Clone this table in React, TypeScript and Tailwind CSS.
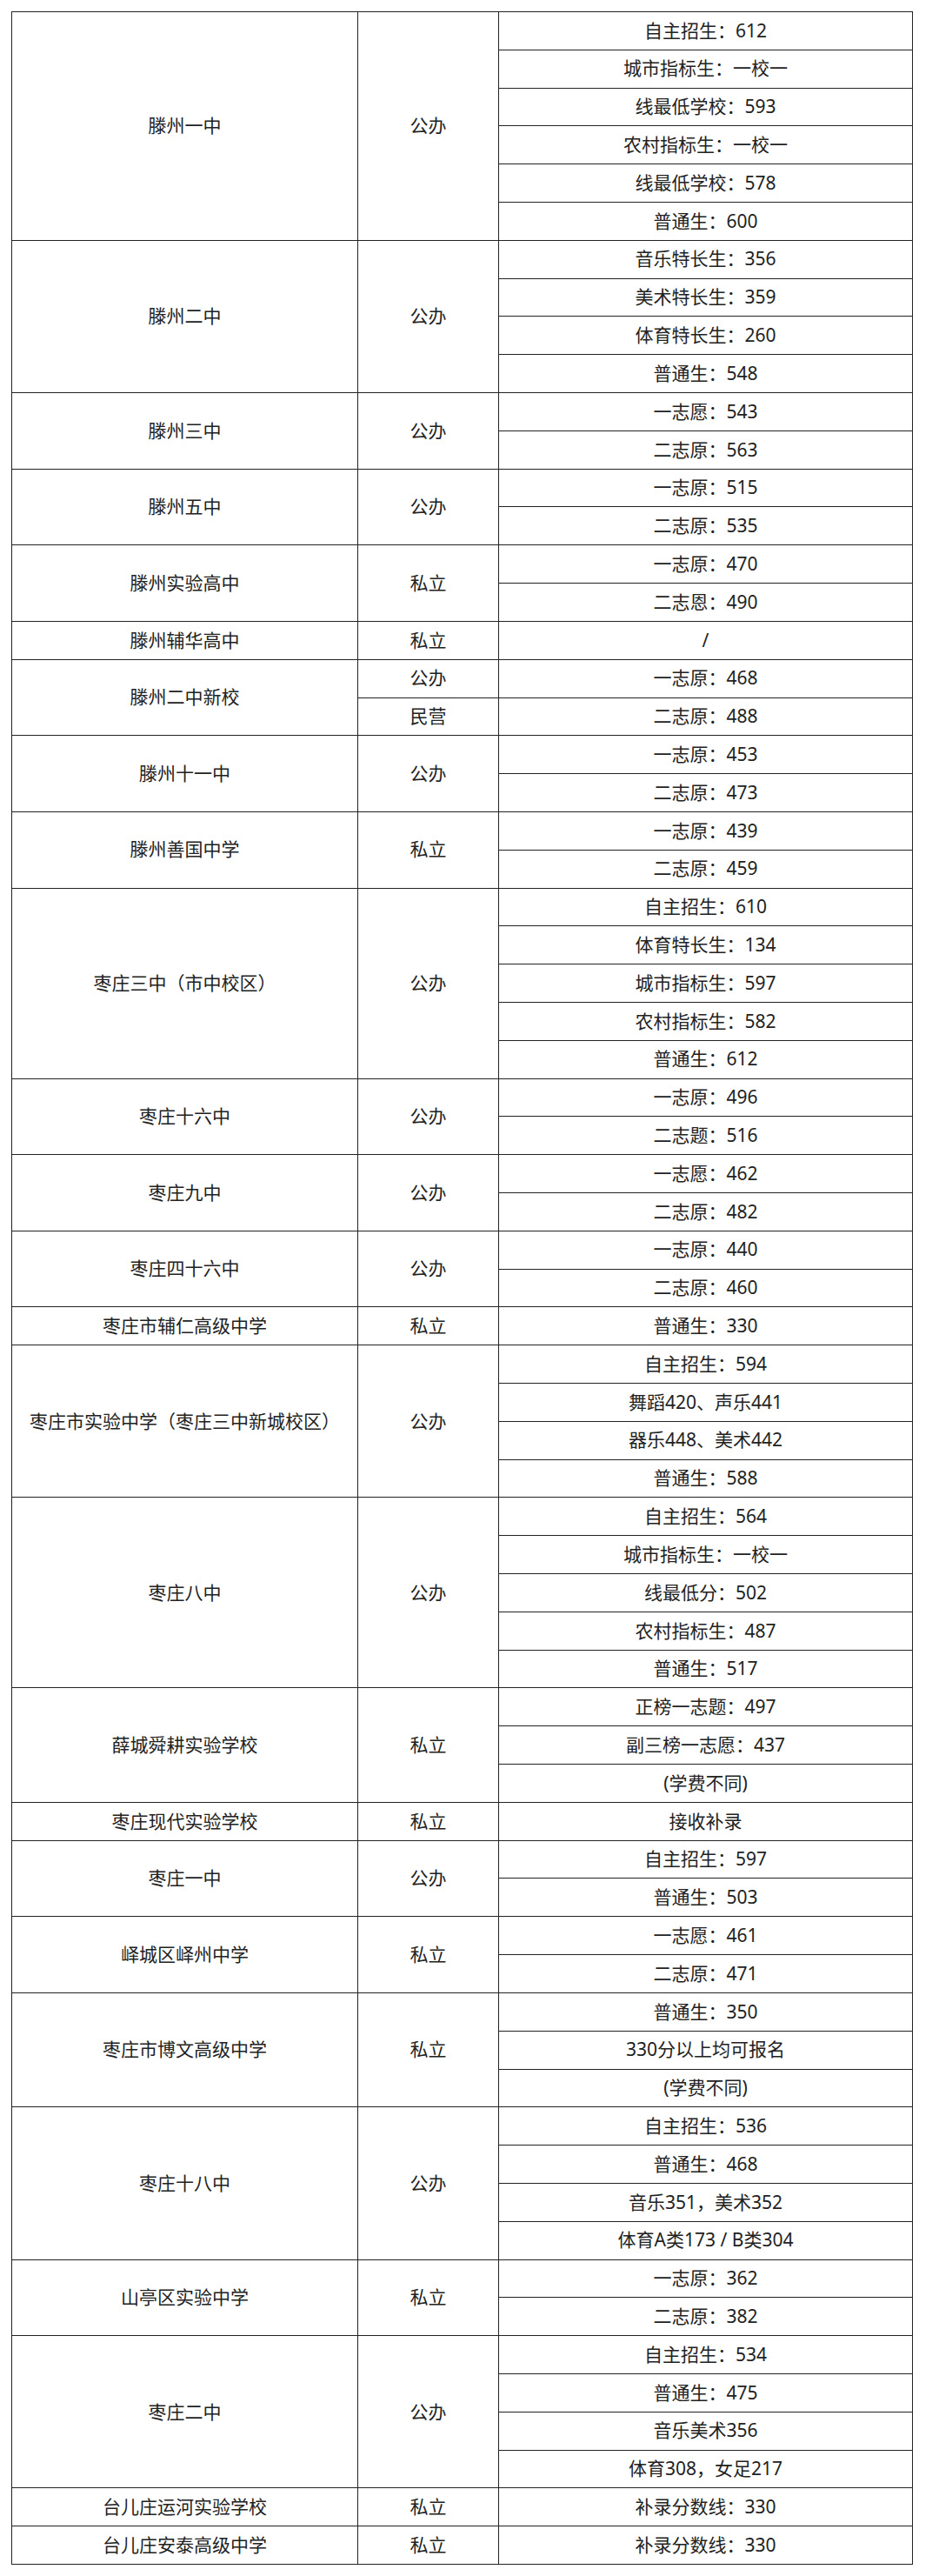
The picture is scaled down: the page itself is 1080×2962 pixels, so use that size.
import React from "react"

type School = {
  name: string
  kind: string | string[]
  lines: string[]
}

const schools: School[] = [
  {
    name: "滕州一中",
    kind: "公办",
    lines: ["自主招生：612", "城市指标生：一校一", "线最低学校：593", "农村指标生：一校一", "线最低学校：578", "普通生：600"],
  },
  { name: "滕州二中", kind: "公办", lines: ["音乐特长生：356", "美术特长生：359", "体育特长生：260", "普通生：548"] },
  { name: "滕州三中", kind: "公办", lines: ["一志愿：543", "二志原：563"] },
  { name: "滕州五中", kind: "公办", lines: ["一志原：515", "二志原：535"] },
  { name: "滕州实验高中", kind: "私立", lines: ["一志原：470", "二志恩：490"] },
  { name: "滕州辅华高中", kind: "私立", lines: ["/"] },
  { name: "滕州二中新校", kind: ["公办", "民营"], lines: ["一志原：468", "二志原：488"] },
  { name: "滕州十一中", kind: "公办", lines: ["一志原：453", "二志原：473"] },
  { name: "滕州善国中学", kind: "私立", lines: ["一志原：439", "二志原：459"] },
  {
    name: "枣庄三中（市中校区）",
    kind: "公办",
    lines: ["自主招生：610", "体育特长生：134", "城市指标生：597", "农村指标生：582", "普通生：612"],
  },
  { name: "枣庄十六中", kind: "公办", lines: ["一志原：496", "二志题：516"] },
  { name: "枣庄九中", kind: "公办", lines: ["一志愿：462", "二志原：482"] },
  { name: "枣庄四十六中", kind: "公办", lines: ["一志原：440", "二志原：460"] },
  { name: "枣庄市辅仁高级中学", kind: "私立", lines: ["普通生：330"] },
  {
    name: "枣庄市实验中学（枣庄三中新城校区）",
    kind: "公办",
    lines: ["自主招生：594", "舞蹈420、声乐441", "器乐448、美术442", "普通生：588"],
  },
  {
    name: "枣庄八中",
    kind: "公办",
    lines: ["自主招生：564", "城市指标生：一校一", "线最低分：502", "农村指标生：487", "普通生：517"],
  },
  { name: "薛城舜耕实验学校", kind: "私立", lines: ["正榜一志题：497", "副三榜一志愿：437", "(学费不同)"] },
  { name: "枣庄现代实验学校", kind: "私立", lines: ["接收补录"] },
  { name: "枣庄一中", kind: "公办", lines: ["自主招生：597", "普通生：503"] },
  { name: "峄城区峄州中学", kind: "私立", lines: ["一志愿：461", "二志原：471"] },
  { name: "枣庄市博文高级中学", kind: "私立", lines: ["普通生：350", "330分以上均可报名", "(学费不同)"] },
  {
    name: "枣庄十八中",
    kind: "公办",
    lines: ["自主招生：536", "普通生：468", "音乐351，美术352", "体育A类173 / B类304"],
  },
  { name: "山亭区实验中学", kind: "私立", lines: ["一志原：362", "二志原：382"] },
  { name: "枣庄二中", kind: "公办", lines: ["自主招生：534", "普通生：475", "音乐美术356", "体育308，女足217"] },
  { name: "台儿庄运河实验学校", kind: "私立", lines: ["补录分数线：330"] },
  { name: "台儿庄安泰高级中学", kind: "私立", lines: ["补录分数线：330"] },
]

const spanClass: Record<number, string> = {
  1: "row-span-1",
  2: "row-span-2",
  3: "row-span-3",
  4: "row-span-4",
  5: "row-span-5",
  6: "row-span-6",
}

const cell = "flex items-center justify-center bg-white text-center whitespace-nowrap"

export default function App() {
  return (
    <div className="min-h-[2962px] bg-white pt-[13px] pl-[13px] font-['Noto_Sans','Noto_Sans_CJK_SC',sans-serif] text-[21px] text-[#222]">
      <div className="grid h-[2936px] w-[1037px] grid-cols-[397px_161px_475px] grid-rows-[repeat(67,minmax(0,1fr))] gap-px border border-[#222] bg-[#222]">
        {schools.map((school) => {
          const span = spanClass[school.lines.length]
          const rows: React.ReactNode[] = []
          rows.push(
            <div key={school.name + "-name"} className={`${cell} col-start-1 ${span}`}>
              {school.name}
            </div>
          )
          school.lines.forEach((line, i) => {
            if (Array.isArray(school.kind)) {
              rows.push(
                <div key={school.name + "-kind-" + i} className={`${cell} col-start-2 row-span-1`}>
                  {school.kind[i]}
                </div>
              )
            } else if (i === 0) {
              rows.push(
                <div key={school.name + "-kind"} className={`${cell} col-start-2 ${span}`}>
                  {school.kind}
                </div>
              )
            }
            rows.push(
              <div key={school.name + "-line-" + i} className={`${cell} col-start-3 row-span-1`}>
                {line}
              </div>
            )
          })
          return rows
        })}
      </div>
    </div>
  )
}
